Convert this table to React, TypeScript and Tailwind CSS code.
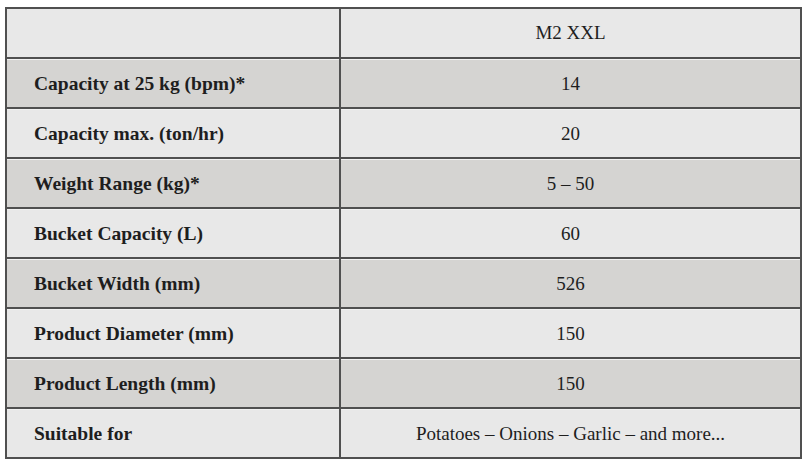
import React from "react";

const rows: [string, string][] = [
  ["Capacity at 25 kg (bpm)*", "14"],
  ["Capacity max. (ton/hr)", "20"],
  ["Weight Range (kg)*", "5 – 50"],
  ["Bucket Capacity (L)", "60"],
  ["Bucket Width (mm)", "526"],
  ["Product Diameter (mm)", "150"],
  ["Product Length (mm)", "150"],
  ["Suitable for", "Potatoes – Onions – Garlic – and more..."],
];

export default function App() {
  return (
    <div className="w-[809px] h-[465px] bg-white pl-[5px] pt-[7px]">
      <div
        className="w-[797px] border-2 border-[#505050] text-[#1e1e1e] text-[19px]"
        style={{ fontFamily: '"Liberation Serif", serif' }}
      >
        <div className="grid grid-cols-[334px_1fr] h-[48px] bg-[#e8e8e8]">
          <div className="border-r-2 border-[#505050]" />
          <div className="flex items-center justify-center pt-[1px]">M2 XXL</div>
        </div>
        {rows.map(([k, v], i) => (
          <div
            key={k}
            className={
              "grid grid-cols-[334px_1fr] h-[50px] border-t-2 border-[#505050] shadow-[inset_0_1px_0_#f2f2f2] " +
              (i % 2 === 0 ? "bg-[#d5d4d2]" : "bg-[#e8e8e8]")
            }
          >
            <div className="border-r-2 border-[#505050] flex items-center pl-[27px] pt-[2px] font-bold text-[19.5px]">
              {k}
            </div>
            <div className="flex items-center justify-center pt-[2px]">{v}</div>
          </div>
        ))}
      </div>
    </div>
  );
}
